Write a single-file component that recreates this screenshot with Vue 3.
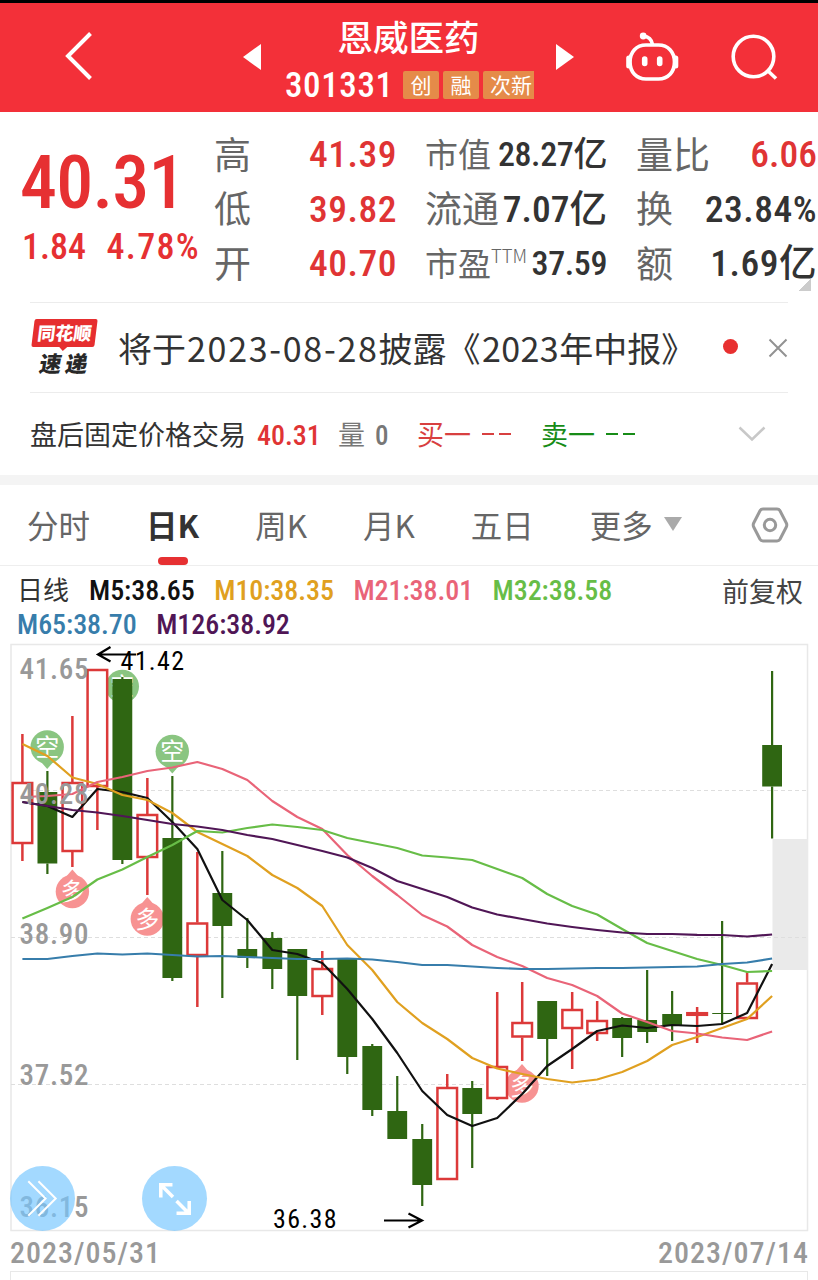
<template>
  <main class="stock-page">
    <header class="top-bar">
      <svg class="back" viewBox="0 0 32 52" aria-label="返回">
        <path d="M28.500 3.500 6 26 28.500 48.500" />
      </svg>
      <span class="tri tri-left"></span>
      <div class="stock-title">
        <h1>恩威医药</h1>
        <div class="code-row">
          <span class="code num">301331</span>
          <span v-for="tag in tags" :key="tag" class="tag" :class="{ clipped: tag.length > 1 }">{{ tag }}</span>
        </div>
      </div>
      <span class="tri tri-right"></span>
      <svg class="robot" viewBox="0 0 54 50" aria-label="助手">
        <path d="M21 13h12.500C43 13 49.500 20 49.500 30S43 47 33.500 47H21C11.500 47 5 40 5 30S11.500 13 21 13Z" />
        <path d="M27.500 12.500C26.500 7 23.500 4.500 18.500 4" />
        <circle class="solid" cx="18.200" cy="4" r="3.400" />
        <path class="ear" d="M3.700 26v8M50.800 26v8" />
        <path class="eye" d="M19.700 27v4.500M34.700 27v4.500" />
      </svg>
      <svg class="search" viewBox="0 0 48 48" aria-label="搜索">
        <circle cx="22.500" cy="22.500" r="20.300" />
        <path d="m36.500 36.500 8.500 8" />
      </svg>
    </header>

    <section class="quote">
      <div class="price-block">
        <div class="price num">40.31</div>
        <div class="change num"><span>1.84</span><span>4.78%</span></div>
      </div>
      <dl v-for="(col, c) in stats" :key="c" class="stat-col" :class="'col-' + c">
        <div v-for="item in col" :key="item.label" class="stat">
          <dt :class="item.size">{{ item.label }}<sup v-if="item.sup">{{ item.sup }}</sup></dt>
          <dd class="num" :class="[{ up: item.up }, item.size]">{{ item.value }}<span v-if="item.unit" class="unit">{{ item.unit }}</span></dd>
        </div>
      </dl>
      <i class="corner"></i>
    </section>

    <section class="notice">
      <div class="logo">
        <span class="logo-top"><b>同花顺</b></span>
        <span class="logo-bottom">速递</span>
      </div>
      <p>将于<span class="date">2023-08-28</span>披露《<span class="year">2023</span>年中报》</p>
      <i class="dot"></i>
      <svg class="close" viewBox="0 0 20 20"><path d="m1.500 1.500 17 17M18.500 1.500l-17 17" /></svg>
    </section>

    <section class="after-hours">
      <span class="ah-name">盘后固定价格交易</span>
      <span class="ah-price num">40.31</span>
      <span class="ah-volume">量</span>
      <span class="ah-zero num">0</span>
      <span class="ah-buy">买一</span>
      <span class="dashes buy"><i></i><i></i></span>
      <span class="ah-sell">卖一</span>
      <span class="dashes sell"><i></i><i></i></span>
      <svg class="chevron" viewBox="0 0 28 16"><path d="m1.500 1.500 12.500 12 12.500-12" /></svg>
    </section>

    <nav class="tabs">
      <button
        v-for="tab in tabs"
        :key="tab"
        type="button"
        :class="{ active: tab === activeTab }"
        @click="activeTab = tab"
      >
        {{ tab }}
      </button>
      <i class="more-arrow"></i>
      <svg class="settings" viewBox="0 0 38 36">
        <path d="M12 2h14q2 0 3 1.700l6.300 12.300q1 2 0 4L29 32.300q-1 1.700-3 1.700H12q-2 0-3-1.700L2.700 20q-1-2 0-4L9 3.700Q10 2 12 2Z" />
        <circle cx="19" cy="18" r="5.700" />
      </svg>
    </nav>

    <section class="ma-legend">
      <div class="ma-row">
        <span class="period">日线</span>
        <span v-for="ma in averages.slice(0, 4)" :key="ma.key" class="num" :class="ma.key">{{ ma.label }}</span>
        <span class="adjust">前复权</span>
      </div>
      <div class="ma-row second">
        <span v-for="ma in averages.slice(4)" :key="ma.key" class="num" :class="ma.key">{{ ma.label }}</span>
      </div>
    </section>

    <section class="chart">
      <svg class="kline" viewBox="0 642 818 590">
        <rect class="frame" x="11" y="644.500" width="796.500" height="586" />
        <rect class="gap" x="772.500" y="839" width="35.500" height="131" />
        <line v-for="y in [790.5, 937.5, 1084.5]" :key="y" class="grid" x1="11" x2="807" :y1="y" :y2="y" />

        <g v-for="(s, i) in signals" :key="'s' + i" class="signal" :class="s.type">
          <path :d="pinTail(s)" />
          <circle :cx="s.x" :cy="s.y" r="16.700" />
          <text :x="s.x" :y="s.y + 8.5">{{ s.type === 'short' ? '空' : '多' }}</text>
        </g>

        <g v-for="(k, i) in candles" :key="'k' + i" :class="k[0] ? 'rise' : 'fall'">
          <path :d="wick(k, i)" />
          <rect
            :x="xAt(i) - (k[0] ? 9.8 : 9.9)"
            :y="k[2] + (k[0] ? 1 : 0)"
            :width="k[0] ? 19.6 : 19.8"
            :height="k[3] - k[2] - (k[0] ? 2 : 0)"
          />
        </g>

        <polyline v-for="ma in averages" :key="ma.key" class="ma" :class="ma.key" :points="points(ma.data)" />

        <text
          v-for="tick in ticks"
          :key="tick.text"
          class="tick"
          x="19.500"
          :y="tick.y"
          textLength="69"
        >{{ tick.text }}</text>

        <path class="arrow" d="M136 654.500H98M110.500 647 98 654.500 110.500 661.500" />
        <text class="extreme" x="120.500" y="670" textLength="63.500">41.42</text>
        <path class="arrow" d="M384 1220.500h38M408.500 1213.500l13.500 7-13.500 7" />
        <text class="extreme" x="273" y="1228" textLength="63.500">36.38</text>
      </svg>
      <button type="button" class="round expand-left" aria-label="展开">
        <svg viewBox="0 0 64 64"><path class="thin" d="m18 15 17 17-17 17M28 15l17 17-17 17" /></svg>
      </button>
      <button type="button" class="round fullscreen" aria-label="全屏">
        <svg viewBox="0 0 64 64"><path d="M30 18.500H18.500V31M18.500 18.500l12 12M34 34.500l12 12M46.500 34.500v12H34" /></svg>
      </button>
    </section>

    <div class="dates num"><span>2023/05/31</span><span>2023/07/14</span></div>
    <div class="volume-panel"></div>
  </main>
</template>

<script setup>
import { ref } from "vue";

const tags = ["创", "融", "次新"];
const tabs = ["分时", "日K", "周K", "月K", "五日", "更多"];
const activeTab = ref("日K");

const stats = [
  [
    { label: "高", value: "41.39", up: true },
    { label: "低", value: "39.82", up: true },
    { label: "开", value: "40.70", up: true },
  ],
  [
    { label: "市值", value: "28.27", unit: "亿", size: "small" },
    { label: "流通", value: "7.07", unit: "亿" },
    { label: "市盈", sup: "TTM", value: "37.59", size: "small" },
  ],
  [
    { label: "量比", value: "6.06", up: true },
    { label: "换", value: "23.84%" },
    { label: "额", value: "1.69", unit: "亿" },
  ],
];

// [rise, high, body top, body bottom, low]
const candles = [
  [1, 734, 782, 844, 861],
  [0, 771, 792, 863.5, 874],
  [1, 716, 782, 852, 867],
  [1, 669, 669, 787, 830],
  [0, 677, 679, 860, 864],
  [1, 778, 814, 858, 895],
  [0, 776, 838, 978, 981],
  [1, 852, 922.5, 956, 1007],
  [0, 851, 893, 926, 998],
  [0, 918, 949, 958, 968],
  [0, 932, 938, 969, 989],
  [0, 949, 949, 996, 1060],
  [1, 951, 968, 997, 1015],
  [0, 958, 959, 1057, 1074],
  [0, 1044, 1046, 1110, 1116],
  [0, 1076, 1111, 1139, 1139],
  [0, 1124, 1139, 1185, 1206],
  [1, 1074, 1087, 1180, 1180],
  [0, 1081, 1088, 1114, 1168],
  [1, 992, 1066, 1099, 1100],
  [1, 982, 1022, 1037.5, 1061],
  [0, 1001, 1001, 1039, 1076],
  [1, 992, 1009, 1029, 1069],
  [1, 1001, 1020, 1034, 1041],
  [0, 1017, 1018, 1038, 1057],
  [0, 970, 1020, 1032, 1043],
  [0, 991, 1014, 1025, 1041],
  [1, 1007, 1012.2, 1015.8, 1043],
  [0, 921, 1013, 1014, 1024],
  [1, 972, 982.5, 1019, 1019],
  [0, 671, 745, 786.5, 838.5],
];

const averages = [
  {
    key: "m5",
    label: "M5:38.65",
    data: [802, 806, 817, 789, 792, 798, 822, 849, 900, 920, 950, 954, 963, 989, 1019, 1053, 1091, 1115, 1126, 1118, 1094, 1066, 1049, 1031, 1025.5, 1028, 1025, 1026, 1024, 1013, 964],
  },
  {
    key: "m10",
    label: "M10:38.35",
    data: [744, 756, 777.5, 784, 795, 800, 813, 832, 844, 856, 875, 888, 906, 945, 970, 1002, 1023, 1039, 1058, 1068.5, 1074, 1079, 1082.5, 1079.5, 1072, 1061, 1045, 1037, 1028, 1019, 996],
  },
  {
    key: "m21",
    label: "M21:38.01",
    data: [797, 796, 794, 782, 777, 771, 767.5, 762, 769, 780, 801, 817, 829, 855, 876, 895, 915, 926.5, 945, 957, 966, 978, 985, 996, 1013.5, 1022, 1031, 1033.5, 1037.5, 1040, 1031.5],
  },
  {
    key: "m32",
    label: "M32:38.58",
    data: [918.5, 908, 897, 879.5, 869.5, 857, 845, 831, 832.5, 828, 824.5, 827, 830, 838, 843, 848, 855.5, 857.5, 860, 869, 878, 894, 906, 914.5, 929, 943, 951, 959, 965, 972, 971],
  },
  {
    key: "m65",
    label: "M65:38.70",
    data: [959, 959, 956, 953.5, 954.5, 953.5, 955, 956.5, 956, 957, 958, 959, 959, 958.5, 959.5, 962, 965, 965, 966.5, 968, 969, 969, 968.5, 968, 968, 967.5, 967, 966.5, 964, 962.5, 958.5],
  },
  {
    key: "m126",
    label: "M126:38.92",
    data: [802, 806, 810, 812.5, 816, 820, 824, 826.5, 830, 835, 839, 845, 851, 857.5, 868, 881, 889, 897, 907.5, 914.5, 919, 923.5, 927, 930, 932.5, 934, 934, 934.8, 935, 936.5, 934.5],
  },
];

const signals = [
  { type: "short", x: 47.2, y: 747 },
  { type: "short", x: 122.3, y: 686.5 },
  { type: "short", x: 172.3, y: 751.5 },
  { type: "long", x: 72.4, y: 891.5 },
  { type: "long", x: 147.3, y: 919 },
  { type: "long", x: 522, y: 1086 },
];

const ticks = [
  { text: "41.65", y: 678.5 },
  { text: "40.28", y: 804 },
  { text: "38.90", y: 944 },
  { text: "37.52", y: 1084.5 },
  { text: "36.15", y: 1217 },
];

function xAt(i) {
  return 22.4 + i * 24.99;
}

function points(data) {
  return data.map((y, i) => `${xAt(i)},${y}`).join(" ");
}

function wick([, high, top, bottom, low], i) {
  return `M${xAt(i)} ${high}V${top}M${xAt(i)} ${bottom}V${low}`;
}

function pinTail({ type, x, y }) {
  const dir = type === "short" ? 1 : -1;
  return `M${x - 7} ${y + dir * 14}L${x} ${y + dir * 22}L${x + 7} ${y + dir * 14}Z`;
}
</script>

<style>
body {
  background: #fff;
}
</style>

<style scoped>
.stock-page {
  width: 818px;
  height: 1280px;
  overflow: hidden;
  background: #fff;
  color: #333;
  font-family: "Noto Sans CJK SC", sans-serif;
}
.num {
  font-family: "Roboto Condensed", Roboto, "Noto Sans CJK SC", sans-serif;
  font-weight: 500;
}
svg {
  display: block;
  fill: none;
  flex: none;
}
button {
  border: 0;
  padding: 0;
  background: none;
  font: inherit;
  color: inherit;
}

.top-bar {
  box-sizing: border-box;
  height: 112px;
  border-top: 3px solid #000;
  background: #f33039;
  color: #fff;
  display: flex;
  align-items: flex-start;
}
.top-bar svg {
  stroke: #fff;
}
.back {
  width: 32px;
  height: 52px;
  margin: 27px 0 0 62px;
  stroke-width: 4;
}
.tri {
  width: 0;
  height: 0;
  margin-top: 41px;
  border: solid transparent;
  border-width: 13.5px 0;
}
.tri-left {
  margin-left: 149px;
  border-right: 18px solid #fff;
}
.tri-right {
  border-left: 18px solid #fff;
}
.stock-title {
  width: 295px;
}
h1 {
  margin: 10px 0 0;
  text-align: center;
  font-size: 35.5px;
  line-height: 46px;
  font-weight: 500;
}
.code-row {
  display: flex;
  align-items: center;
  height: 30px;
  margin-top: 11px;
  padding-left: 24px;
}
.code {
  width: 118px;
  padding-top: 2px;
  font-size: 35px;
  line-height: 30px;
  letter-spacing: 0.6px;
}
.tag {
  box-sizing: border-box;
  width: 36px;
  height: 28px;
  margin-right: 4px;
  border-radius: 2px;
  background: #e58b49;
  font-size: 21px;
  line-height: 26px;
  text-align: center;
  white-space: nowrap;
}
.tag.clipped {
  width: 51px;
  margin-right: 0;
  padding-left: 7px;
  border-radius: 2px 0 0 2px;
  text-align: left;
}
.robot {
  width: 54px;
  height: 50px;
  margin: 29px 0 0 51px;
  stroke-width: 3.7;
}
.robot .solid {
  fill: #fff;
  stroke: none;
}
.robot .ear {
  stroke-width: 5;
  stroke-linecap: round;
}
.robot .eye {
  stroke-width: 5.6;
  stroke-linecap: round;
}
.search {
  width: 48px;
  height: 48px;
  margin: 31px 0 0 52px;
  stroke-width: 3.6;
}

.quote {
  position: relative;
  height: 190px;
  display: flex;
}
.price-block {
  width: 214px;
  color: #e63032;
}
.price {
  margin: 29px 0 0 20px;
  font-size: 74px;
  line-height: 84px;
  letter-spacing: -0.8px;
}
.change {
  display: flex;
  gap: 20.5px;
  margin-left: 22px;
  font-size: 36px;
  line-height: 44px;
}
.change span:last-child {
  letter-spacing: 1.3px;
}
.stat-col {
  margin: 15.5px 0 0;
}
.col-0 {
  width: 183px;
}
.col-1 {
  width: 182px;
  margin-left: 28px;
}
.col-2 {
  width: 181px;
  margin-left: 29px;
}
.stat {
  display: flex;
  justify-content: space-between;
  align-items: center;
  height: 54.5px;
  white-space: nowrap;
}
dt {
  padding-bottom: 4px;
  color: #666;
  font-size: 37px;
  line-height: 50px;
}
dt.small {
  font-size: 33px;
}
sup {
  display: inline-block;
  vertical-align: 13px;
  font-size: 18.5px;
  line-height: 1;
  font-weight: 300;
}
dd {
  margin: 0;
  font-size: 37.5px;
  line-height: 52px;
  padding-bottom: 1px;
}
.col-0 dd {
  letter-spacing: 0.5px;
}
.col-2 dd {
  letter-spacing: 0.5px;
}
.col-2 .up {
  letter-spacing: 0;
}
.col-1 .small {
  letter-spacing: -0.4px;
}
.col-1 dt.small {
  letter-spacing: 0;
}
dd.small {
  font-size: 34px;
}
dd.up {
  color: #e03434;
}
.corner {
  position: absolute;
  right: 7px;
  bottom: 11px;
  width: 13px;
  height: 13px;
  background: linear-gradient(135deg, transparent 50%, #ccc 50%);
}

.notice,
.after-hours {
  box-sizing: border-box;
  margin: 0 30px;
  border-top: 1px solid #ececec;
  display: flex;
  align-items: center;
}
.notice {
  height: 90px;
}
.logo {
  width: 68px;
  height: 60px;
  color: #282828;
  font-weight: 900;
}
.logo-top {
  display: block;
  position: relative;
  width: 63px;
  height: 28px;
  margin: 1px 0 0 3px;
  border-radius: 2px;
  background: #e62e2f;
  color: #fff;
  font-size: 18px;
  line-height: 27px;
  text-align: center;
  transform: skewX(-7deg);
}
.logo-top::after {
  content: "";
  position: absolute;
  left: 27px;
  top: 27px;
  border: solid transparent;
  border-width: 5px 5px 0;
  border-top-color: #e62e2f;
}
.logo-bottom {
  display: block;
  margin-left: 10px;
  font-size: 22px;
  line-height: 30px;
  letter-spacing: 4px;
  transform: skewX(-10deg);
}
.notice p {
  flex: none;
  width: 594px;
  margin: 0 0 0 20px;
  font-size: 34px;
  line-height: 50px;
  white-space: nowrap;
}
.date {
  margin-left: 1px;
  letter-spacing: 1.7px;
}
.year {
  margin-left: 1.5px;
  letter-spacing: 0.4px;
}
.dot {
  flex: none;
  width: 15px;
  height: 15px;
  margin: -2px 0 0 10.5px;
  border-radius: 50%;
  background: #e83030;
}
.close {
  width: 20px;
  height: 20px;
  margin-left: 30.5px;
  stroke: #929292;
  stroke-width: 2;
}

.after-hours {
  height: 83px;
  font-size: 27px;
  line-height: 40px;
  white-space: nowrap;
}
.after-hours > * {
  flex: none;
}
.ah-name {
  width: 227px;
}
.ah-price {
  width: 81px;
  padding-top: 3px;
  color: #e03434;
  font-size: 28px;
}
.ah-volume {
  width: 37px;
  color: #777;
}
.ah-zero {
  width: 42px;
  padding-top: 3px;
  color: #777;
}
.ah-buy {
  width: 65px;
  color: #d84040;
}
.ah-sell {
  width: 65px;
  color: #178c17;
}
.dashes {
  display: flex;
  gap: 5px;
  width: 59px;
}
.dashes i {
  width: 12px;
  height: 2.5px;
}
.buy i {
  background: #d84040;
}
.sell i {
  background: #178c17;
}
.chevron {
  width: 28px;
  height: 16px;
  margin-left: 73px;
  stroke: #c8c8c8;
  stroke-width: 2.5;
}

.tabs {
  box-sizing: border-box;
  height: 91px;
  border-top: 10px solid #f4f4f4;
  border-bottom: 1.5px solid #eee;
  padding-left: 27px;
  display: flex;
  align-items: center;
  font-size: 31.5px;
  color: #666;
}
.tabs button {
  position: relative;
  height: 79px;
  padding-bottom: 3px;
  white-space: nowrap;
}
.tabs button:not(:first-child) {
  margin-left: 56px;
}
.tabs button.active {
  color: #333;
  font-weight: 700;
}
.active::after {
  content: "";
  position: absolute;
  left: 12px;
  bottom: 0;
  width: 30px;
  height: 8px;
  border-radius: 4px;
  background: #e63032;
}
.more-arrow {
  margin-left: 11px;
  margin-top: -2px;
  border: solid transparent;
  border-width: 14px 9px 0;
  border-top-color: #aaa;
}
.settings {
  width: 38px;
  height: 36px;
  margin: 0 29px 0 auto;
  stroke: #999;
  stroke-width: 3;
}

.ma-legend {
  height: 76px;
  padding: 7px 15px 0 17px;
  box-sizing: border-box;
}
.ma-row {
  display: flex;
  align-items: center;
  height: 34px;
  font-size: 28px;
  letter-spacing: -0.05px;
  white-space: nowrap;
}
.ma-row .num {
  margin-right: 19.5px;
}
.period {
  width: 72px;
  padding-bottom: 3px;
  font-size: 26px;
}
.adjust {
  margin-left: auto;
  color: #444;
  font-size: 27px;
  letter-spacing: 0;
}
.m5 {
  color: #111;
  stroke: #111;
}
.m10 {
  color: #e0a020;
  stroke: #e0a020;
}
.m21 {
  color: #e96478;
  stroke: #e96478;
}
.m32 {
  color: #67bd47;
  stroke: #67bd47;
}
.m65 {
  color: #377dab;
  stroke: #377dab;
}
.m126 {
  color: #501656;
  stroke: #501656;
}

.chart {
  position: relative;
  height: 590px;
}
.kline {
  width: 818px;
  height: 590px;
  font-family: "Roboto Condensed", Roboto, sans-serif;
}
.frame {
  stroke: #e8e8e8;
  stroke-width: 1.5;
}
.gap {
  fill: #eaeaea;
}
.grid {
  stroke: #dedede;
  stroke-dasharray: 4 3;
}
.signal text {
  fill: #fff;
  stroke: none;
  font-family: "Noto Sans CJK SC", sans-serif;
  font-size: 24px;
  text-anchor: middle;
}
.short {
  fill: #8ac581;
}
.long {
  fill: #f79292;
}
.rise {
  stroke: #dc3939;
  stroke-width: 2.5;
}
.rise rect {
  fill: #fff;
}
.fall {
  stroke: #2f6612;
  stroke-width: 2.2;
}
.fall rect {
  fill: #2f6612;
  stroke: none;
}
.ma {
  fill: none;
  stroke-width: 2.2;
  stroke-linejoin: round;
}
.tick {
  fill: #999;
  font-size: 29px;
  font-weight: 500;
}
.arrow {
  stroke: #000;
  stroke-width: 2.2;
}
.extreme {
  fill: #000;
  font-size: 26px;
}
.round {
  position: absolute;
  top: 524px;
  width: 65px;
  height: 65px;
  border-radius: 50%;
  background: rgba(120, 199, 255, 0.68);
}
.round svg {
  width: 65px;
  height: 65px;
  stroke: #fff;
  stroke-width: 3.5;
}
.round .thin {
  stroke-width: 2;
}
.expand-left {
  left: 10px;
}
.fullscreen {
  left: 142px;
}
.dates {
  display: flex;
  justify-content: space-between;
  height: 39px;
  padding: 0 9px 0 10px;
  color: #999;
  font-size: 30px;
  line-height: 41px;
  letter-spacing: 1px;
}
.volume-panel {
  height: 20px;
  margin: 0 10px;
  border: 1.5px solid #e8e8e8;
}
</style>
